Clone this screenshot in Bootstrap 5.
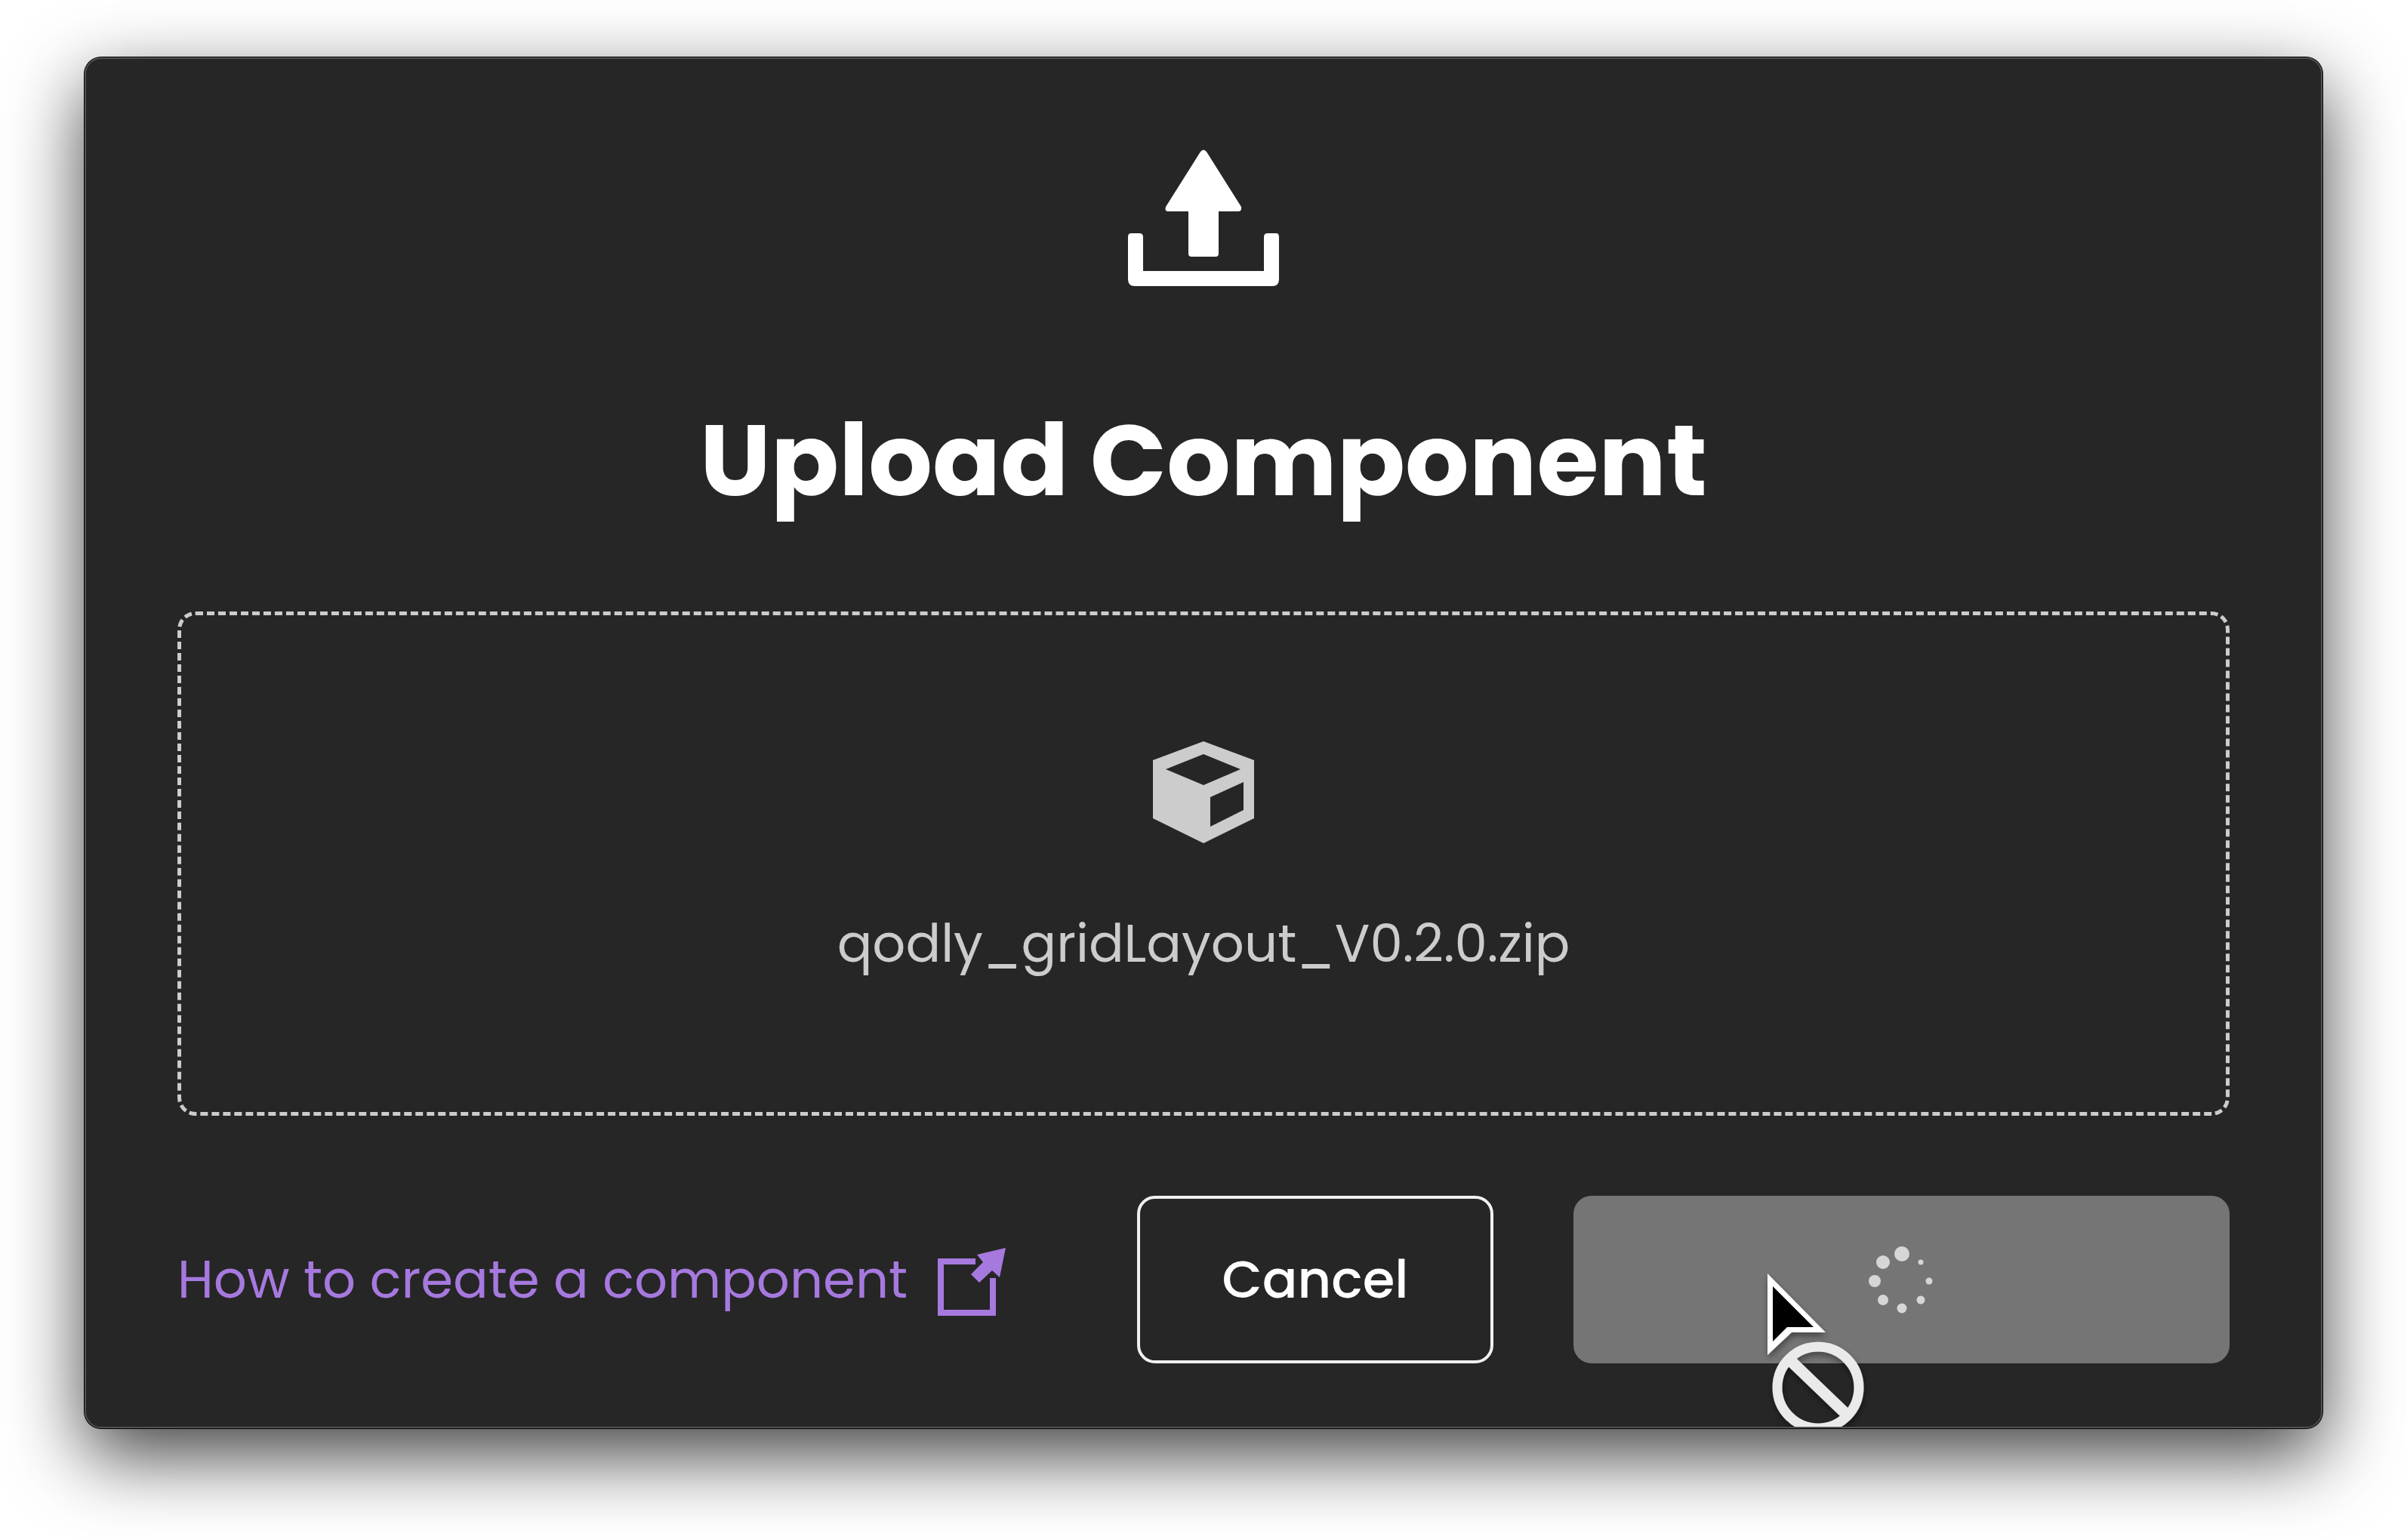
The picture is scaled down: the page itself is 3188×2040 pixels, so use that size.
<!DOCTYPE html>
<html lang="en">
<head>
<meta charset="utf-8">
<meta name="viewport" content="width=device-width, initial-scale=1">
<title>Upload Component</title>
<link href="https://cdn.jsdelivr.net/npm/bootstrap@5.3.0/dist/css/bootstrap.min.css" rel="stylesheet">
<style>
  body { background: #fff; font-family: Poppins, Inter, "Open Sans", sans-serif; font-size: 69px; line-height: 104px; }
  .stage { padding: 76px 112px 148px; }
  .upload-dialog {
    background: #262626; color: #fff; border: 2px solid #515151; border-radius: 22px;
    padding: 120px 121px 84px; overflow: hidden;
    box-shadow: 0 0 0 1px #000, 0 36px 100px rgba(0, 0, 0, .75);
  }
  .upload-title { font-size: 133px; line-height: 204px; font-weight: 700; margin: 126px 0 98px; }
  .drop-zone { border: 5px dashed #ccc; border-radius: 24px; color: #ccc; padding: 167px 40px 171px; gap: 80px; }
  .dialog-actions { margin-top: 106px; }
  .button-group { gap: 106px; }
  .help-link, .help-link:hover { color: #a679df; gap: 38px; }
  .action-btn { height: 222px; border-radius: 24px; font-size: 69px; line-height: 104px; font-weight: 500; }
  .cancel-btn, .cancel-btn:hover { width: 472px; color: #fff; background: transparent; border: 4px solid #f0f0f0; }
  .submit-btn, .submit-btn:disabled { width: 869px; background: #757575; border: 0; opacity: 1; }
  .blocked-pointer { left: 249px; top: 93px; pointer-events: none; }
  svg { display: block; flex: none; }
</style>
</head>
<body>
<main class="stage">
  <section class="upload-dialog d-flex flex-column" role="dialog" aria-labelledby="dialogTitle">
    <svg class="align-self-center" width="202" height="184" viewBox="0 0 202 184" fill="#fff" aria-hidden="true">
      <path d="M97 3q4-5 8 0L151 76q1 6-4 6H121V138q0 4-4 4H85q-4 0-4-4V82H55q-6 0-4-6Z"/>
      <path d="M5 111H16q5 0 5 5V161H181V116q0-5 5-5H197q4 0 4 5V172q0 9-9 9H10q-9 0-9-9V116q0-5 4-5Z"/>
    </svg>
    <h1 class="upload-title text-center" id="dialogTitle">Upload Component</h1>
    <div class="drop-zone d-flex flex-column align-items-center">
      <svg width="134" height="136" viewBox="0 0 134 136" fill="#ccc" fill-rule="evenodd" aria-hidden="true">
        <path d="M67 0L134 25V102L67 135L0 102V25ZM67 17L17 37L67 58L116 37ZM76 74V113L120 91V54Z"/>
      </svg>
      <span>qodly_gridLayout_V0.2.0.zip</span>
    </div>
    <div class="dialog-actions d-flex align-items-center justify-content-between">
      <a class="help-link d-flex align-items-center text-decoration-none" href="#">
        <span>How to create a component</span>
        <svg width="92" height="96" viewBox="0 0 92 96" aria-hidden="true">
          <path d="M52 24H6V92H75V46" fill="none" stroke="#a679df" stroke-width="8"/>
          <path d="M92 6L84 45L74 36L57 52L46 41L62 25L54 15Z" fill="#a679df"/>
        </svg>
      </a>
      <div class="button-group d-flex">
        <button class="btn action-btn cancel-btn" type="button">Cancel</button>
        <div class="position-relative">
          <button class="btn action-btn submit-btn d-flex align-items-center justify-content-center" type="button" disabled aria-label="Uploading">
            <svg width="92" height="92" viewBox="-46 -46 92 92" fill="#d6d6d6" aria-hidden="true">
              <circle cx="0" cy="-34" r="10"/><circle cx="-25" cy="-23" r="9"/><circle cx="-36" cy="2" r="8"/><circle cx="-25" cy="27" r="7"/>
              <circle cx="0" cy="38" r="6.5"/><circle cx="25" cy="27" r="5.5"/><circle cx="36" cy="2" r="4.5"/><circle cx="25" cy="-23" r="3.5"/>
            </svg>
          </button>
          <svg class="blocked-pointer position-absolute" width="160" height="236" viewBox="0 0 160 236" aria-hidden="true">
            <defs>
              <filter id="pointerShadow" x="-20%" y="-20%" width="140%" height="140%"><feDropShadow dx="1" dy="5" stdDeviation="4" flood-opacity=".4"/></filter>
            </defs>
            <g filter="url(#pointerShadow)">
              <path d="M8 10L85 88H40L8 118Z" fill="#fff"/>
              <path d="M15 27L69 81H34L15 100Z" fill="#000"/>
              <circle cx="75" cy="161" r="54" fill="none" stroke="#eaeaea" stroke-width="13"/>
              <path d="M38 125L112 196" stroke="#eaeaea" stroke-width="15"/>
            </g>
          </svg>
        </div>
      </div>
    </div>
  </section>
</main>
<script src="https://cdn.jsdelivr.net/npm/bootstrap@5.3.0/dist/js/bootstrap.bundle.min.js"></script>
</body>
</html>
